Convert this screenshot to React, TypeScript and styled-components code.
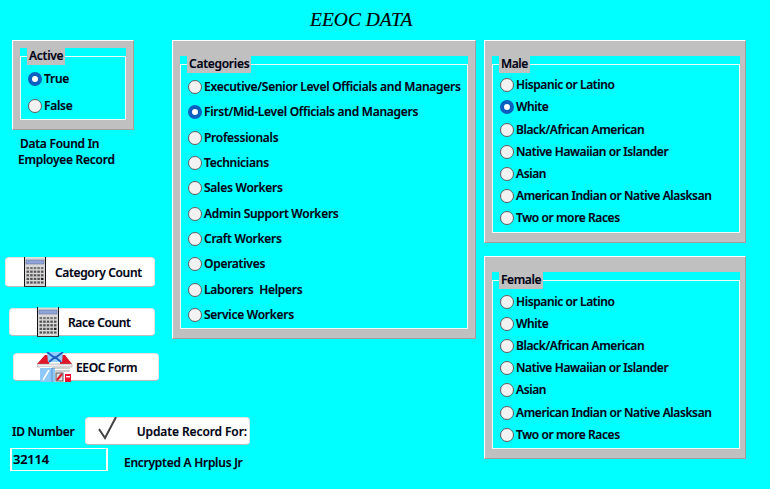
import React, { FC } from "react"
import styled, { createGlobalStyle } from "styled-components"

const GlobalStyle = createGlobalStyle`
  html, body {
    margin: 0;
    padding: 0;
    background: #00ffff;
  }
  body {
    font-family: "Noto Sans", "Open Sans", sans-serif;
    font-size: 12px;
    font-weight: 600;
    letter-spacing: -0.27px;
    -webkit-text-stroke: 0.15px #000014;
    color: #000014;
  }
`

const Page = styled.div`
  width: 770px;
  height: 489px;
  background: #00ffff;
  overflow: hidden;
`

const Title = styled.h1`
  margin: 0;
  height: 40px;
  padding: 8px 0 0 310px;
  box-sizing: border-box;
  font-family: "Liberation Serif", serif;
  font-size: 19.5px;
  line-height: 24px;
  font-style: italic;
  font-weight: 400;
  letter-spacing: 0;
  color: #000;
`

const Columns = styled.div`
  display: flex;
  align-items: flex-start;
`

const LeftColumn = styled.div`
  width: 172px;
  flex: none;
  display: flex;
  flex-direction: column;
  align-items: flex-start;
`

const MiddleColumn = styled.div`
  width: 312px;
  flex: none;
`

const RightColumn = styled.div`
  width: 262px;
  flex: none;
  display: flex;
  flex-direction: column;
  gap: 13px;
  letter-spacing: -0.4px;
`

const Panel = styled.div<{ $w: number; $h: number; $top: number; $right: number; $ml?: number }>`
  box-sizing: border-box;
  width: ${p => p.$w}px;
  height: ${p => p.$h}px;
  margin-left: ${p => p.$ml ?? 0}px;
  background: #c0c0c0;
  border: 1px solid;
  border-color: #fff #a0a0a0 #a0a0a0 #fff;
  padding: ${p => p.$top}px ${p => p.$right}px 9px 7px;
`

const Well = styled.div`
  height: 100%;
  background: #00ffff;
`

const Group = styled.fieldset`
  box-sizing: border-box;
  height: 100%;
  margin: 0;
  padding: 0;
  border: 1px solid #eefafa;
  min-width: 0;
`

const GroupLabel = styled.legend`
  margin-left: 6px;
  padding: 0 2px;
  height: 17px;
  line-height: 15px;
  background: #c0c0c0;
`

const OptionList = styled.div<{ $step: number; $top: number; $left: number }>`
  display: grid;
  grid-auto-rows: ${p => p.$step}px;
  padding: ${p => p.$top}px 0 0 ${p => p.$left}px;
`

const Option = styled.label`
  display: flex;
  align-items: center;
  gap: 2px;
  white-space: pre;
  line-height: 16px;
`

const Radio = styled.input.attrs({ type: "radio" })`
  appearance: none;
  box-sizing: border-box;
  flex: none;
  width: 14px;
  height: 14px;
  margin: 0;
  border-radius: 50%;
  background: #f2f2f2;
  border: 1px solid #5f5f5f;

  &:checked {
    background: #fff;
    border: 4.5px solid #0a5fc0;
  }
`

const Note = styled.div<{ $ml: number; $mt: number }>`
  margin: ${p => p.$mt}px 0 0 ${p => p.$ml}px;
  line-height: 16px;
  white-space: pre;
`

const Action = styled.button<{ $w: number; $ml: number; $mt: number; $icon: number; $gap: number; $h?: number }>`
  box-sizing: border-box;
  display: flex;
  align-items: center;
  width: ${p => p.$w}px;
  height: ${p => p.$h ?? 28}px;
  margin: ${p => p.$mt}px 0 0 ${p => p.$ml}px;
  padding: 0 0 0 ${p => p.$icon}px;
  gap: ${p => p.$gap}px;
  background: #fff;
  border: 1px solid #e4e4e4;
  border-bottom: 1px solid #bdbdbd;
  border-radius: 4px;
  font: inherit;
  letter-spacing: -0.35px;
  color: inherit;
  white-space: pre;

  svg {
    flex: none;
  }
`

const FooterGrid = styled.div`
  display: grid;
  grid-template-columns: 85px 165px auto;
  margin-top: 36px;
  width: 300px;
  align-items: center;
`

const IdBox = styled.input`
  box-sizing: border-box;
  width: 98px;
  height: 23px;
  margin: 3px 0 0 10px;
  padding: 0 0 2px 1px;
  background: #00ffff;
  border: solid #fff;
  border-width: 1px 2px;
  font: inherit;
  font-size: 13px;
  letter-spacing: inherit;
  color: inherit;
`

const Owner = styled.div`
  margin: 9px 0 0 39px;
  white-space: pre;
  grid-column: 2 / 4;
`

const IdLabel = styled.div`
  margin: 0 0 0 12px;
  white-space: pre;
`

const UpdateLabel = styled.span`
  margin-left: auto;
  margin-right: 2px;
  letter-spacing: -0.1px;
`

const CheckMark = styled.svg`
  margin-top: -4px;
`

const CalculatorIcon: FC = () => {
  const keys: React.ReactElement[] = []
  for (let row = 0; row < 5; row++) {
    for (let col = 0; col < 5; col++) {
      const tall = col === 4 && row === 3
      keys.push(
        <rect
          key={`${row}-${col}`}
          x={2.5 + col * 3.6}
          y={10 + row * 3.6}
          width={2.6}
          height={2.2}
          fill={tall ? "#222" : row === 0 ? "#777" : "#555"}
        />
      )
    }
  }
  return (
    <svg width="22" height="30" viewBox="0 0 22 30">
      <rect x="0.5" y="0.5" width="21" height="29" fill="#d9d9d9" />
      <path d="M0.5 0V30M21.5 0V30" stroke="#111" />
      <path d="M0 29.5H22" stroke="#333" />
      <rect x="2" y="3" width="18" height="4" fill="#8fa3d6" stroke="#6a7a9f" strokeWidth="0.6" />
      {keys}
    </svg>
  )
}

const HouseIcon: FC = () => (
  <svg width="36" height="30" viewBox="0 0 36 30">
    <path d="M0 12 L8 3 L12 3 L12 12Z M23 3 L28 3 L35 12 L23 12Z" fill="#e0162b" />
    <path d="M10 0H26L25 10H11Z" fill="#8fd0ff" />
    <path d="M10 0L18 6L26 0M12 10L18 5L24 10" fill="none" stroke="#1d5fc0" strokeWidth="1.8" />
    <rect x="0" y="12" width="35" height="3" fill="#eee" stroke="#888" strokeWidth="0.5" />
    <rect x="3" y="15" width="30" height="15" fill="#fff" />
    <rect x="3" y="16" width="15" height="14" fill="#8ec8f8" />
    <path d="M6 28L12 18" stroke="#fff" strokeWidth="1.5" />
    <path d="M15 16V30" stroke="#5a90d0" />
    <rect x="19" y="21" width="7" height="8" fill="#ddd" stroke="#555" />
    <path d="M20 28L25 22" stroke="#e0162b" strokeWidth="2" />
    <path d="M15 16H33M18 19H33" stroke="#777" strokeWidth="0.7" />
    <rect x="28" y="22" width="6" height="8" fill="#f01030" />
    <rect x="29" y="24" width="4" height="1.4" fill="#fff" />
  </svg>
)

const CheckIcon: FC = () => (
  <CheckMark width="20" height="24" viewBox="0 0 20 24">
    <path d="M1 12 L7 21 L18 0" fill="none" stroke="#444" strokeWidth="2" />
  </CheckMark>
)

const categories = [
  "Executive/Senior Level Officials and Managers",
  "First/Mid-Level Officials and Managers",
  "Professionals",
  "Technicians",
  "Sales Workers",
  "Admin Support Workers",
  "Craft Workers",
  "Operatives",
  "Laborers  Helpers",
  "Service Workers",
]

const races = [
  "Hispanic or Latino",
  "White",
  "Black/African American",
  "Native Hawaiian or Islander",
  "Asian",
  "American Indian or Native Alasksan",
  "Two or more Races",
]

interface ChoiceProps {
  name: string
  items: string[]
  selected?: string
  step: number
  top: number
  left: number
}

const Choices: FC<ChoiceProps> = ({ name, items, selected, step, top, left }) => (
  <OptionList $step={step} $top={top} $left={left}>
    {items.map(item => (
      <Option key={item}>
        <Radio name={name} defaultChecked={item === selected} />
        {item}
      </Option>
    ))}
  </OptionList>
)

const App: FC = () => (
  <Page>
    <GlobalStyle />
    <Title>EEOC DATA</Title>
    <Columns>
      <LeftColumn>
        <Panel $w={122} $h={90} $top={7} $right={7} $ml={12}>
          <Well>
            <Group>
              <GroupLabel>Active</GroupLabel>
              <Choices name="active" items={["True", "False"]} selected="True" step={27} top={0} left={7} />
            </Group>
          </Well>
        </Panel>
        <Note $ml={20} $mt={6}>Data Found In</Note>
        <Note $ml={18} $mt={0}>Employee Record</Note>
        <Action $w={150} $ml={5} $mt={89} $icon={18} $gap={9} $h={30}>
          <CalculatorIcon />
          Category Count
        </Action>
        <Action $w={146} $ml={9} $mt={21} $icon={27} $gap={9}>
          <CalculatorIcon />
          Race Count
        </Action>
        <Action $w={146} $ml={13} $mt={17} $icon={23} $gap={3}>
          <HouseIcon />
          EEOC Form
        </Action>
        <FooterGrid>
          <IdLabel>ID Number</IdLabel>
          <Action $w={165} $ml={0} $mt={0} $icon={12} $gap={0}>
            <CheckIcon />
            <UpdateLabel>Update Record For:</UpdateLabel>
          </Action>
          <span />
          <IdBox defaultValue="32114" />
          <Owner>Encrypted A Hrplus Jr</Owner>
        </FooterGrid>
      </LeftColumn>
      <MiddleColumn>
        <Panel $w={304} $h={299} $top={15} $right={7}>
          <Well>
            <Group>
              <GroupLabel>Categories</GroupLabel>
              <Choices name="category" items={categories} selected="First/Mid-Level Officials and Managers" step={25.3} top={1.5} left={7} />
            </Group>
          </Well>
        </Panel>
      </MiddleColumn>
      <RightColumn>
        <Panel $w={262} $h={203} $top={15} $right={5}>
          <Well>
            <Group>
              <GroupLabel>Male</GroupLabel>
              <Choices name="male" items={races} selected="White" step={22.2} top={1.2} left={7} />
            </Group>
          </Well>
        </Panel>
        <Panel $w={262} $h={203} $top={15} $right={5}>
          <Well>
            <Group>
              <GroupLabel>Female</GroupLabel>
              <Choices name="female" items={races} step={22.2} top={1.5} left={7} />
            </Group>
          </Well>
        </Panel>
      </RightColumn>
    </Columns>
  </Page>
)

export default App
